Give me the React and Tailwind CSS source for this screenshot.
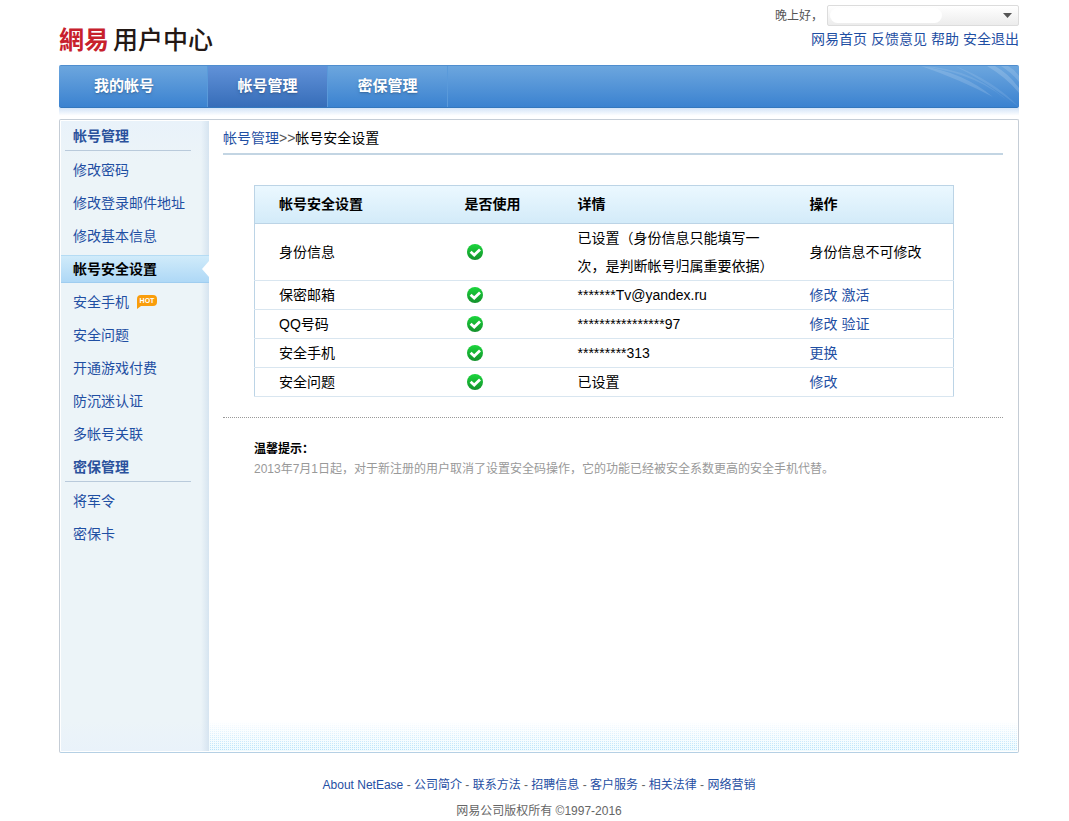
import React, { useState } from "react";

const tabs = [
  { id: "home", label: "我的帐号", width: "w-[149px] pr-[18px]" },
  { id: "account", label: "帐号管理", width: "w-[120px]" },
  { id: "security", label: "密保管理", width: "w-[120px]" },
];

const sideGroups = [
  {
    title: "帐号管理",
    items: [
      "修改密码",
      "修改登录邮件地址",
      "修改基本信息",
      "帐号安全设置",
      "安全手机",
      "安全问题",
      "开通游戏付费",
      "防沉迷认证",
      "多帐号关联",
    ],
  },
  { title: "密保管理", items: ["将军令", "密保卡"] },
];

const rows = [
  {
    name: "身份信息",
    detail: "已设置（身份信息只能填写一次，是判断帐号归属重要依据）",
    note: "身份信息不可修改",
    actions: [],
  },
  { name: "保密邮箱", detail: "*******Tv@yandex.ru", actions: ["修改", "激活"] },
  { name: "QQ号码", detail: "****************97", actions: ["修改", "验证"] },
  { name: "安全手机", detail: "*********313", actions: ["更换"] },
  { name: "安全问题", detail: "已设置", actions: ["修改"] },
];

const topLinks = ["网易首页", "反馈意见", "帮助", "安全退出"];

const footerLinks = [
  "About NetEase",
  "公司简介",
  "联系方法",
  "招聘信息",
  "客户服务",
  "相关法律",
  "网络营销",
];

const CheckIcon = () => (
  <svg width="16" height="16" viewBox="0 0 16 16" role="img" aria-label="已使用">
    <defs>
      <linearGradient id="ok" x1="0" y1="0" x2="0" y2="1">
        <stop offset="0" stopColor="#1bd63c" />
        <stop offset="1" stopColor="#14902c" />
      </linearGradient>
    </defs>
    <circle cx="8" cy="8" r="8" fill="url(#ok)" />
    <path d="M3.6 7.8 L7.2 11 L13 5.6" fill="none" stroke="#fff" strokeWidth="2.8" />
  </svg>
);

const HotBadge = () => (
  <svg width="20" height="14" viewBox="0 0 20 14" className="ml-2">
    <path
      d="M4 0 H16 Q20 0 20 4 V7 Q20 11 16 11 H4 L0 14 V4 Q0 0 4 0 Z"
      fill="#f99d0b"
    />
    <text
      x="10"
      y="8"
      textAnchor="middle"
      fontSize="7"
      fontWeight="700"
      fontFamily="Liberation Sans, sans-serif"
      fill="#fff"
    >
      HOT
    </text>
  </svg>
);

const Header = () => (
  <header className="flex h-[65px] items-start justify-between">
    <h1 className="flex items-center pt-[20px] text-[25px] leading-[40px]">
      <span className="font-bold text-[#c7202c]">網易</span>
      <span className="ml-1 font-medium text-[#231815]">用户中心</span>
    </h1>
    <div className="flex flex-col items-end pt-[5px]">
      <div className="flex items-center">
        <label htmlFor="user" className="mr-1 text-[12px] text-[#555]">
          晚上好，
        </label>
        <div className="relative flex">
          <select
            id="user"
            className="h-[21px] w-[192px] appearance-none rounded-xs border border-[#dcdcdc] bg-linear-to-b from-white to-[#ececec]"
          />
          <span className="absolute top-[3px] left-[3px] h-[15px] w-[112px] rounded-full bg-white" />
          <svg
            width="9"
            height="5"
            viewBox="0 0 9 5"
            className="pointer-events-none absolute top-2 right-[7px]"
          >
            <path d="M0 0 H9 L4.5 5 Z" fill="#555" />
          </svg>
        </div>
      </div>
      <nav className="mt-[3px] flex gap-1 leading-[20px]">
        {topLinks.map((link) => (
          <a key={link} href="#" className="text-[#1f4fa3]">
            {link}
          </a>
        ))}
      </nav>
    </div>
  </header>
);

const NavBar = ({ active, onChange }) => (
  <div>
    <nav className="flex h-[43px] overflow-hidden rounded-xs border-t border-b border-t-[#4f8ecf] border-b-[#3377bd] bg-linear-to-b from-[#6ca6de] to-[#3a82d0]">
      {tabs.map((tab) => (
        <button
          key={tab.id}
          onClick={() => onChange(tab.id)}
          className={`${tab.width} border-r border-[#5a9ada] pb-px text-[15px] font-bold text-white text-shadow-md ${
            active === tab.id ? "bg-linear-to-b from-[#6192d8] to-[#366db9]" : ""
          }`}
        >
          {tab.label}
        </button>
      ))}
      <svg width="98" height="41" viewBox="0 0 98 41" className="ml-auto">
        <g fill="#fff">
          <path d="M0 0 Q42 6 72 31 Q40 14 0 0 Z" opacity="0.14" />
          <path d="M0 0 Q55 2 92 40 Q60 8 0 0 Z" opacity="0.1" />
          <path d="M34 0 Q72 14 98 41 Q66 16 34 0 Z" opacity="0.1" />
          <path d="M66 0 Q86 12 98 27 L98 22 Q88 8 74 0 Z" opacity="0.16" />
          <path d="M80 0 Q91 7 98 16 L98 10 Q93 3 87 0 Z" opacity="0.14" />
        </g>
      </svg>
    </nav>
    <div className="h-[11px] bg-linear-to-b from-[#d3e4f7] to-white to-70%" />
  </div>
);

const Sidebar = ({ current, onSelect }) => (
  <aside className="flex w-[148px] shrink-0 flex-col gap-[5px] bg-[linear-gradient(to_right,transparent_140px,#d6e4f0),linear-gradient(#e9f2fa,#ecf4f8_40px,#ecf4f8_600px,#e9f2fa)] pt-px">
    {sideGroups.map((group) => (
      <React.Fragment key={group.title}>
        <h2 className="mr-[18px] ml-1 h-[29px] border-b border-[#b9cadb] pl-2 leading-[28px] font-bold text-[#2a519c]">
          {group.title}
        </h2>
        {group.items.map((item) => (
          <a
            key={item}
            href="#"
            onClick={() => onSelect(item)}
            className={
              item === current
                ? "relative flex h-[28px] items-center border-t border-b border-t-[#b5dcf4] border-b-[#9fcdf0] bg-linear-to-b from-[#d0ebfa] to-[#aed8f6] pl-3 font-bold text-black"
                : "flex h-[28px] items-center pl-3 text-[#1f4fa3]"
            }
          >
            {item}
            {item === "安全手机" && <HotBadge />}
            {item === current && (
              <svg width="7" height="16" viewBox="0 0 7 16" className="absolute right-0">
                <path d="M7 0 L0 8 L7 16 Z" fill="#fff" />
              </svg>
            )}
          </a>
        ))}
      </React.Fragment>
    ))}
  </aside>
);

const SecurityTable = () => (
  <table className="w-full table-fixed border border-[#bcd4e6] text-left text-black">
    <thead>
      <tr className="h-[38px] border-b border-[#bcd4e6] bg-linear-to-b from-[#ebf8ff] to-[#d3ebf9]">
        <th className="w-[186px] pl-6">帐号安全设置</th>
        <th className="w-[113px] pl-6">是否使用</th>
        <th className="w-[232px] pl-6">详情</th>
        <th className="pl-6">操作</th>
      </tr>
    </thead>
    <tbody>
      {rows.map((row) => (
        <tr key={row.name} className="border-b border-[#d9e6f0] leading-[28px]">
          <td className="pl-6">{row.name}</td>
          <td className="pl-[26px]">
            <CheckIcon />
          </td>
          <td className="pr-[10px] pl-6">{row.detail}</td>
          <td className="pl-6">
            {row.note}
            <span className="flex gap-1">
              {row.actions.map((action) => (
                <a key={action} href="#" className="text-[#1f4fa3]">
                  {action}
                </a>
              ))}
            </span>
          </td>
        </tr>
      ))}
    </tbody>
  </table>
);

const App = () => {
  const [tab, setTab] = useState("account");
  const [current, setCurrent] = useState("帐号安全设置");

  return (
    <div className="bg-white pr-[50px] pl-[59px] font-['Liberation_Sans','Noto_Sans_CJK_SC',sans-serif] text-[14px]">
      <Header />
      <NavBar active={tab} onChange={setTab} />

      <div className="flex min-h-[634px] rounded-xs border border-[#c5cdd6] border-b-[#b5d0e4] p-px">
        <Sidebar current={current} onSelect={setCurrent} />
        <main className="flex grow flex-col">
          <div className="mx-[14px] border-b-2 border-[#c3d5e3] pt-[2px] leading-[30px] text-black">
            <a href="#" className="text-[#1f4fa3]">
              帐号管理
            </a>
            <span className="text-[#555]">&gt;&gt;</span>
            {current}
          </div>
          <div className="mr-[63px] ml-[45px] pt-[30px] pb-5">
            <SecurityTable />
          </div>
          <div className="mx-[14px] border-t border-dotted border-[#999]" />
          <div className="ml-[45px] pt-[21px] text-[12px] leading-[20px]">
            <p className="font-bold text-black">温馨提示：</p>
            <p className="text-[#999]">
              2013年7月1日起，对于新注册的用户取消了设置安全码操作，它的功能已经被安全系数更高的安全手机代替。
            </p>
          </div>
          <div className="mt-auto h-[30px] bg-[conic-gradient(#b4e0fa_25%,#effbff_0)] bg-[length:2px_2px] [mask-image:linear-gradient(transparent,black)]" />
        </main>
      </div>

      <footer className="pt-[19px] text-center text-[12px] leading-[26px] text-[#666]">
        <p>
          {footerLinks.map((link, i) => (
            <React.Fragment key={link}>
              {i > 0 && " - "}
              <a href="#" className="text-[#1f4fa3]">
                {link}
              </a>
            </React.Fragment>
          ))}
        </p>
        <p>网易公司版权所有 ©1997-2016</p>
      </footer>
    </div>
  );
};

export default App;
